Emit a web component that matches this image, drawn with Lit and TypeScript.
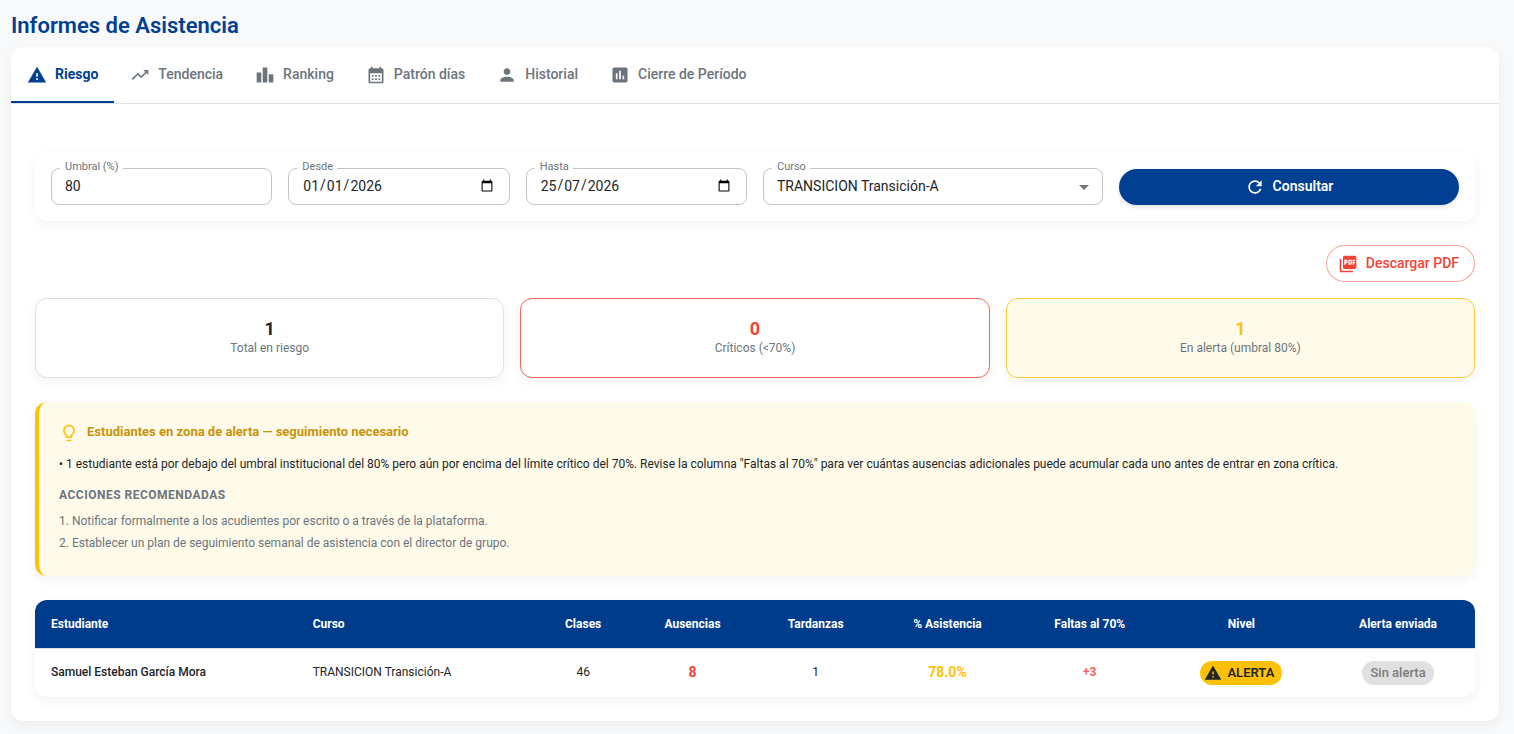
import { LitElement, html, css, svg } from "lit";
import { customElement, property, state } from "lit/decorators.js";
import { classMap } from "lit/directives/class-map.js";

const ICONS: Record<string, string> = {
  warning: "M1 21h22L12 2 1 21zm12-3h-2v-2h2v2zm0-4h-2v-4h2v4z",
  trending: "m16 6 2.29 2.29-4.88 4.88-4-4L2 16.59 3.41 18l6-6 4 4 6.3-6.29L22 12V6z",
  leaderboard: "M7.5 21H2V9h5.5v12zm7.25-18h-5.5v18h5.5V3zM22 11h-5.5v10H22V11z",
  calendar:
    "M19 4h-1V2h-2v2H8V2H6v2H5c-1.11 0-1.99.9-1.99 2L3 20c0 1.1.89 2 2 2h14c1.1 0 2-.9 2-2V6c0-1.1-.9-2-2-2zm0 16H5V10h14v10zM9 14H7v-2h2v2zm4 0h-2v-2h2v2zm4 0h-2v-2h2v2zm-8 4H7v-2h2v2zm4 0h-2v-2h2v2zm4 0h-2v-2h2v2z",
  person:
    "M12 12c2.21 0 4-1.79 4-4s-1.79-4-4-4-4 1.79-4 4 1.79 4 4 4zm0 2c-2.67 0-8 1.34-8 4v2h16v-2c0-2.66-5.33-4-8-4z",
  assessment:
    "M19 3H5c-1.1 0-2 .9-2 2v14c0 1.1.9 2 2 2h14c1.1 0 2-.9 2-2V5c0-1.1-.9-2-2-2zM9 17H7v-7h2v7zm4 0h-2V7h2v10zm4 0h-2v-4h2v4z",
  refresh:
    "M17.65 6.35C16.2 4.9 14.21 4 12 4c-4.42 0-7.99 3.58-7.99 8s3.57 8 7.99 8c3.73 0 6.84-2.55 7.73-6h-2.08c-.82 2.33-3.04 4-5.65 4-3.31 0-6-2.69-6-6s2.69-6 6-6c1.66 0 3.14.69 4.22 1.78L13 11h7V4z",
  pdf: "M20 2H8c-1.1 0-2 .9-2 2v12c0 1.1.9 2 2 2h12c1.1 0 2-.9 2-2V4c0-1.1-.9-2-2-2m-8.5 7.5c0 .83-.67 1.5-1.5 1.5H9v2H7.5V7H10c.83 0 1.5.67 1.5 1.5zm5 2c0 .83-.67 1.5-1.5 1.5h-2.5V7H15c.83 0 1.5.67 1.5 1.5zm4-3H19v1h1.5V11H19v2h-1.5V7h3zM9 9.5h1v-1H9zM4 6H2v14c0 1.1.9 2 2 2h14v-2H4zm10 5.5h1v-3h-1z",
  bulb: "M9 21c0 .5.4 1 1 1h4c.6 0 1-.5 1-1v-1H9v1zm3-19C8.1 2 5 5.1 5 9c0 2.4 1.2 4.5 3 5.7V17c0 .5.4 1 1 1h6c.6 0 1-.5 1-1v-2.3c1.8-1.3 3-3.4 3-5.7 0-3.9-3.1-7-7-7zm2.9 11.1-.9.6V16h-4v-2.3l-.9-.6C7.8 12.2 7 10.6 7 9c0-2.8 2.2-5 5-5s5 2.2 5 5c0 1.6-.8 3.2-2.1 4.1z",
  dropdown: "M7 10l5 5 5-5z",
};

@customElement("app-icon")
class AppIcon extends LitElement {
  @property() name = "";

  static styles = css`
    :host {
      display: inline-flex;
      flex: none;
      width: 20px;
      height: 20px;
    }
    .glyph {
      width: 100%;
      height: 100%;
      fill: currentColor;
    }
  `;

  render() {
    return html`<svg class="glyph" viewBox="0 0 24 24" aria-hidden="true">
      ${svg`<path d=${ICONS[this.name] ?? ""}></path>`}
    </svg>`;
  }
}

interface Row {
  name: string;
  course: string;
  classes: number;
  absences: number;
  late: number;
  attendance: string;
  remaining: string;
  level: string;
  sent: string;
}

@customElement("app-root")
class AppRoot extends LitElement {
  @state() private tab = "Riesgo";

  private tabs = [
    { label: "Riesgo", icon: "warning" },
    { label: "Tendencia", icon: "trending" },
    { label: "Ranking", icon: "leaderboard" },
    { label: "Patrón días", icon: "calendar" },
    { label: "Historial", icon: "person" },
    { label: "Cierre de Período", icon: "assessment" },
  ];

  private stats = [
    { value: 1, label: "Total en riesgo", tone: "neutral" },
    { value: 0, label: "Críticos (<70%)", tone: "critical" },
    { value: 1, label: "En alerta (umbral 80%)", tone: "alert" },
  ];

  private actions = [
    "Notificar formalmente a los acudientes por escrito o a través de la plataforma.",
    "Establecer un plan de seguimiento semanal de asistencia con el director de grupo.",
  ];

  private columns = [
    "Estudiante",
    "Curso",
    "Clases",
    "Ausencias",
    "Tardanzas",
    "% Asistencia",
    "Faltas al 70%",
    "Nivel",
    "Alerta enviada",
  ];

  private rows: Row[] = [
    {
      name: "Samuel Esteban García Mora",
      course: "TRANSICION Transición-A",
      classes: 46,
      absences: 8,
      late: 1,
      attendance: "78.0%",
      remaining: "+3",
      level: "ALERTA",
      sent: "Sin alerta",
    },
  ];

  static styles = css`
    :host {
      --blue: #003f91;
      --grey: #6c757d;
      --ink: #212529;
      --red: #f44336;
      --amber: #ffc107;
      --cream: #fffbea;
      --soft: 0 4px 12px rgba(0, 0, 0, 0.05);
      display: block;
      box-sizing: border-box;
      min-height: 100vh;
      padding: 8px 15px 13px 11px;
      background: #f8f9fb;
      color: var(--ink);
      font-family: Roboto, "Liberation Sans", sans-serif;
      font-size: 14px;
    }
    *,
    *::before,
    *::after {
      box-sizing: border-box;
    }
    button,
    input,
    select {
      font: inherit;
      color: inherit;
    }
    .title {
      margin: 0 0 4px;
      font-size: 22px;
      line-height: 35px;
      font-weight: 600;
      color: var(--blue);
    }
    .panel {
      background: #fff;
      border-radius: 12px;
      box-shadow: var(--soft);
    }
    /* Text beside an icon sits slightly above the icon's centre. */
    .lift {
      padding-bottom: 2px;
    }
    .tabs {
      display: flex;
      border-bottom: 1px solid #e0e0e0;
    }
    .tab {
      display: flex;
      align-items: center;
      gap: 8px;
      height: 56px;
      padding: 2px 16px 0;
      border: 0;
      border-bottom: 2px solid transparent;
      background: none;
      color: var(--grey);
      font-weight: 500;
      white-space: nowrap;
      cursor: pointer;
    }
    .tab.active {
      color: var(--blue);
      font-weight: 700;
      border-bottom-color: var(--blue);
    }
    .body {
      display: flex;
      flex-direction: column;
      gap: 24px;
      padding: 48px 24px 24px;
    }
    .filters {
      display: grid;
      grid-template-columns: repeat(12, 1fr);
      gap: 16px;
      align-items: end;
      padding: 16px;
      border-radius: 12px;
      box-shadow: var(--soft);
    }
    .field {
      position: relative;
      grid-column: span 2;
    }
    .wide {
      grid-column: span 3;
    }
    .label {
      position: absolute;
      top: -8px;
      left: 9px;
      padding: 0 4px 0 5px;
      background: #fff;
      color: var(--grey);
      font-size: 11px;
      line-height: 14px;
    }
    .control {
      display: block;
      width: 100%;
      height: 37px;
      margin: 0;
      padding: 0 13px 2px;
      border: 1px solid #c4c4c4;
      border-radius: 8px;
      background: transparent;
      appearance: none;
      outline: none;
    }
    .number {
      appearance: textfield;
    }
    .date {
      padding-bottom: 1px;
    }
    /* Day, month and year sit in fixed cells; the separators fill the cells between. */
    .date::-webkit-datetime-edit-fields-wrapper {
      display: inline-grid;
      grid-template-columns: repeat(5, auto);
    }
    .date::-webkit-datetime-edit-day-field {
      grid-area: 1 / 1;
    }
    .date::-webkit-datetime-edit-month-field {
      grid-area: 1 / 3;
    }
    .date::-webkit-datetime-edit-year-field {
      grid-area: 1 / 5;
    }
    .arrow {
      position: absolute;
      top: 7px;
      right: 7px;
      width: 24px;
      height: 24px;
      color: #757575;
      pointer-events: none;
    }
    .submit {
      display: flex;
      align-items: center;
      justify-content: center;
      gap: 8px;
      height: 36px;
      border: 0;
      border-radius: 18px;
      background: var(--blue);
      color: #fff;
      font-weight: 600;
      box-shadow: 0 2px 4px rgba(0, 0, 0, 0.12);
      cursor: pointer;
    }
    .report {
      display: flex;
      flex-direction: column;
      gap: 16px;
    }
    .download {
      align-self: flex-end;
      display: flex;
      align-items: center;
      gap: 8px;
      height: 37px;
      padding: 0 15px 0 11px;
      border: 1px solid rgba(244, 67, 54, 0.5);
      border-radius: 20px;
      background: #fff;
      color: var(--red);
      font-weight: 500;
      cursor: pointer;
    }
    .stats {
      display: grid;
      grid-template-columns: repeat(3, 1fr);
      gap: 16px;
    }
    .stat {
      display: flex;
      flex-direction: column;
      align-items: center;
      height: 80px;
      padding: 19px 16px;
      border: 1px solid #e0e0e0;
      border-radius: 12px;
      background: #fff;
      box-shadow: var(--soft);
    }
    .stat.critical {
      border-color: #f4645a;
    }
    .stat.alert {
      border-color: #ffcb3a;
      background: var(--cream);
    }
    .value {
      font-size: 18px;
      line-height: 21px;
      font-weight: 700;
    }
    .critical .value {
      color: var(--red);
    }
    .alert .value {
      color: var(--amber);
    }
    .caption {
      font-size: 12px;
      line-height: 18px;
      color: var(--grey);
    }
    .notice {
      padding: 20px 20px 22px;
      border-left: 4px solid var(--amber);
      border-radius: 12px;
      background: var(--cream);
      box-shadow: var(--soft);
      font-size: 12px;
    }
    .heading {
      display: flex;
      align-items: center;
      gap: 8px;
      margin: 0 0 10px;
      font-size: 13px;
      line-height: 20px;
      font-weight: 700;
      color: #c8930a;
    }
    .heading app-icon {
      color: var(--amber);
    }
    .text {
      margin: 0 0 12px;
      line-height: 20px;
    }
    .subheading {
      margin: 0 0 6px;
      font-size: 12px;
      line-height: 18px;
      font-weight: 700;
      letter-spacing: 0.5px;
      color: var(--grey);
    }
    .actions {
      margin: 0;
      padding: 0;
      list-style: none;
      line-height: 22px;
      color: var(--grey);
    }
    .sheet {
      overflow: hidden;
      border-radius: 12px;
      box-shadow: var(--soft);
    }
    .table {
      width: 100%;
      border-collapse: collapse;
      font-size: 12px;
    }
    .th {
      height: 48px;
      padding: 0 16px;
      background: #003c8c;
      color: #fff;
      font-weight: 700;
      text-align: center;
      white-space: nowrap;
    }
    .td {
      height: 49px;
      padding: 0 16px 2px;
      border-top: 1px solid #e0e0e0;
      text-align: center;
      white-space: nowrap;
    }
    .badge {
      padding-bottom: 0;
    }
    .left {
      text-align: left;
    }
    .name {
      font-weight: 500;
    }
    .absences,
    .attendance {
      font-size: 14px;
      font-weight: 700;
      color: var(--red);
    }
    .attendance {
      color: var(--amber);
    }
    .remaining {
      font-weight: 700;
      color: #f4645a;
    }
    .chip {
      display: inline-flex;
      align-items: center;
      gap: 5px;
      height: 24px;
      padding: 0 8px;
      border-radius: 12px;
      font-size: 13px;
      font-weight: 500;
      background: #e0e0e0;
      color: #7b7b7b;
    }
    .chip.level {
      padding: 0 8px 0 4px;
      background: var(--amber);
      color: var(--ink);
      font-weight: 600;
    }
    .chip app-icon {
      width: 18px;
      height: 18px;
    }
  `;

  render() {
    return html`
      <h1 class="title">Informes de Asistencia</h1>
      <main class="panel">
        <div class="tabs" role="tablist">
          ${this.tabs.map(
            (t) => html`<button
              type="button"
              role="tab"
              aria-selected=${t.label === this.tab}
              class=${classMap({ tab: true, active: t.label === this.tab })}
              @click=${() => (this.tab = t.label)}
            >
              <app-icon name=${t.icon}></app-icon><span class="lift">${t.label}</span>
            </button>`
          )}
        </div>
        <div class="body">
          <form class="filters" @submit=${(e: Event) => e.preventDefault()}>
            <div class="field">
              <input class="control number" id="umbral" type="number" value="80" />
              <label class="label" for="umbral">Umbral (%)</label>
            </div>
            <div class="field">
              <input class="control date" id="desde" type="date" value="2026-01-01" />
              <label class="label" for="desde">Desde</label>
            </div>
            <div class="field">
              <input class="control date" id="hasta" type="date" value="2026-07-25" />
              <label class="label" for="hasta">Hasta</label>
            </div>
            <div class="field wide">
              <select class="control" id="curso">
                <option>TRANSICION Transición-A</option>
              </select>
              <label class="label" for="curso">Curso</label>
              <app-icon class="arrow" name="dropdown"></app-icon>
            </div>
            <button class="submit wide" type="submit">
              <app-icon name="refresh"></app-icon><span class="lift">Consultar</span>
            </button>
          </form>
          <div class="report">
            <button class="download" type="button">
              <app-icon name="pdf"></app-icon><span class="lift">Descargar PDF</span>
            </button>
            <div class="stats">
              ${this.stats.map(
                (s) => html`<div class="stat ${s.tone}">
                  <span class="value">${s.value}</span>
                  <span class="caption">${s.label}</span>
                </div>`
              )}
            </div>
          </div>
          <section class="notice">
            <h2 class="heading">
              <app-icon name="bulb"></app-icon>
              <span class="lift">Estudiantes en zona de alerta — seguimiento necesario</span>
            </h2>
            <p class="text">
              • 1 estudiante está por debajo del umbral institucional del 80% pero aún por encima del
              límite crítico del 70%. Revise la columna "Faltas al 70%" para ver cuántas ausencias
              adicionales puede acumular cada uno antes de entrar en zona crítica.
            </p>
            <h3 class="subheading">ACCIONES RECOMENDADAS</h3>
            <ol class="actions">
              ${this.actions.map((a, i) => html`<li>${i + 1}. ${a}</li>`)}
            </ol>
          </section>
          <div class="sheet">
            <table class="table">
              <thead>
                <tr>
                  ${this.columns.map(
                    (c, i) =>
                      html`<th scope="col" class=${classMap({ th: true, left: i < 2 })}>${c}</th>`
                  )}
                </tr>
              </thead>
              <tbody>
                ${this.rows.map(
                  (r) => html`<tr>
                    <td class="td left name">${r.name}</td>
                    <td class="td left">${r.course}</td>
                    <td class="td">${r.classes}</td>
                    <td class="td absences">${r.absences}</td>
                    <td class="td">${r.late}</td>
                    <td class="td attendance">${r.attendance}</td>
                    <td class="td remaining">${r.remaining}</td>
                    <td class="td badge">
                      <span class="chip level"><app-icon name="warning"></app-icon>${r.level}</span>
                    </td>
                    <td class="td badge"><span class="chip">${r.sent}</span></td>
                  </tr>`
                )}
              </tbody>
            </table>
          </div>
        </div>
      </main>
    `;
  }
}
